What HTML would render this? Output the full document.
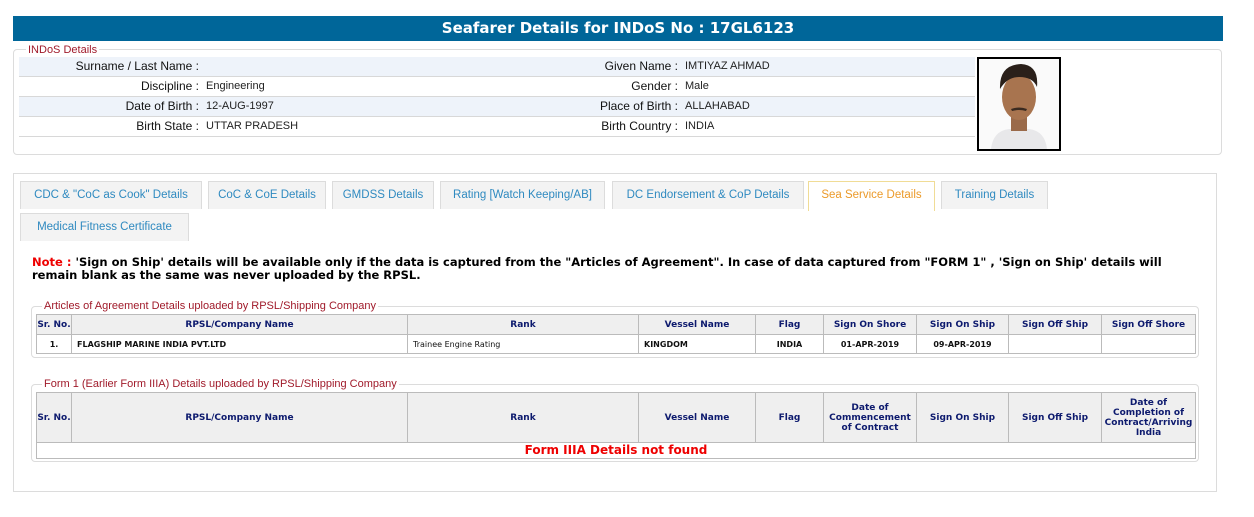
<!DOCTYPE html>
<html><head><meta charset="utf-8"><style>
*{box-sizing:border-box;margin:0;padding:0}
body{width:1254px;height:517px;background:#fff;position:relative;font-family:"Liberation Sans",Arial,sans-serif;overflow:hidden}
.a{position:absolute}
.hdr{left:13px;top:16px;width:1210px;height:25px;background:#006699;color:#fff;font:bold 15px "DejaVu Sans",Verdana,sans-serif;text-align:center;line-height:25px}
.fs{border:1px solid #dcdcdc;border-radius:4px}
.lg{background:#fff;color:#a01a2a;font-size:11px;padding:0 2px;line-height:12px}
.row{left:19px;width:956px;height:20px;border-bottom:1px solid #d8d8d8;font-size:11px;line-height:19px;color:#222}
.row.alt{background:#eef3fa}
.row span{position:absolute;white-space:nowrap}
.l1{right:776px;text-align:right;color:#111;font-size:12px}
.v1{left:187px}
.l2{right:297px;color:#111;font-size:12px}
.v2{left:666px}
.tab{position:absolute;height:28px;background:#f3f3f3;border:1px solid #dcdcdc;border-bottom:none;color:#2f8ac0;font-size:11.5px;line-height:27px;text-align:center}
.tab.on{background:#fff;border-color:#f0dc96;color:#eb9a2a;height:30px}
.note{left:32px;top:256px;width:1160px;font:bold 11.5px "DejaVu Sans",Verdana,sans-serif;line-height:13px;color:#000}
table{position:absolute;border-collapse:collapse;font:bold 9px "DejaVu Sans",Verdana,sans-serif;table-layout:fixed}
td,th{border:1px solid #bbb}
th{background:#efefef;color:#0d1a6e;font-weight:bold}
td{color:#111;font-size:8px}
</style></head><body>
<div class="a hdr">Seafarer Details for INDoS No : 17GL6123</div>

<div class="a fs" style="left:13px;top:49px;width:1209px;height:106px"></div>
<div class="a lg" style="left:26px;top:44px">INDoS Details</div>
<div class="a row alt" style="top:57px"><span class="l1">Surname / Last Name :</span><span class="l2">Given Name :</span><span class="v2">IMTIYAZ AHMAD</span></div>
<div class="a row" style="top:77px"><span class="l1">Discipline :</span><span class="v1">Engineering</span><span class="l2">Gender :</span><span class="v2">Male</span></div>
<div class="a row alt" style="top:97px"><span class="l1">Date of Birth :</span><span class="v1">12-AUG-1997</span><span class="l2">Place of Birth :</span><span class="v2">ALLAHABAD</span></div>
<div class="a row" style="top:117px"><span class="l1">Birth State :</span><span class="v1">UTTAR PRADESH</span><span class="l2">Birth Country :</span><span class="v2">INDIA</span></div>

<div class="a" style="left:977px;top:57px;width:84px;height:94px;border:2px solid #000;background:#fafafa;overflow:hidden">
<svg width="80" height="90" viewBox="0 0 80 90">
<path d="M12 90 Q14 72 30 70 L50 70 Q66 72 68 90Z" fill="#e8e8ea"/>
<rect x="32" y="58" width="16" height="14" fill="#9a6a4a"/>
<ellipse cx="40" cy="38" rx="17" ry="23" fill="#a8744f"/>
<path d="M21 30 Q20 6 42 5 Q60 6 58 28 Q54 18 40 18 Q28 18 21 30Z" fill="#2a201a"/>
<path d="M32 50 Q40 47 48 50 L47 52 Q40 50 33 52Z" fill="#3a2a20"/>
</svg></div>

<div class="a fs" style="left:13px;top:173px;width:1204px;height:319px;border-radius:0"></div>
<div class="tab" style="left:20px;top:181px;width:182px">CDC &amp; "CoC as Cook" Details</div>
<div class="tab" style="left:208px;top:181px;width:118px">CoC &amp; CoE Details</div>
<div class="tab" style="left:332px;top:181px;width:102px">GMDSS Details</div>
<div class="tab" style="left:440px;top:181px;width:165px">Rating [Watch Keeping/AB]</div>
<div class="tab" style="left:612px;top:181px;width:192px">DC Endorsement &amp; CoP Details</div>
<div class="tab on" style="left:808px;top:181px;width:127px">Sea Service Details</div>
<div class="tab" style="left:941px;top:181px;width:107px">Training Details</div>
<div class="tab" style="left:20px;top:213px;width:169px">Medical Fitness Certificate</div>

<div class="a note"><span style="color:#e00">Note :</span> 'Sign on Ship' details will be available only if the data is captured from the "Articles of Agreement". In case of data captured from "FORM 1" , 'Sign on Ship' details will remain blank as the same was never uploaded by the RPSL.</div>

<div class="a fs" style="left:31px;top:306px;width:1168px;height:52px"></div>
<div class="a lg" style="left:42px;top:300px;font-size:11px">Articles of Agreement Details uploaded by RPSL/Shipping Company</div>
<table style="left:36px;top:314px;width:1159px">
<colgroup><col style="width:35px"><col style="width:336px"><col style="width:231px"><col style="width:117px"><col style="width:68px"><col style="width:93px"><col style="width:92px"><col style="width:93px"><col style="width:94px"></colgroup>
<tr style="height:20px"><th>Sr. No.</th><th>RPSL/Company Name</th><th>Rank</th><th>Vessel Name</th><th>Flag</th><th>Sign On Shore</th><th>Sign On Ship</th><th>Sign Off Ship</th><th>Sign Off Shore</th></tr>
<tr style="height:19px"><td style="text-align:center">1.</td><td style="padding-left:5px">FLAGSHIP MARINE INDIA PVT.LTD</td><td style="padding-left:5px;font-weight:normal">Trainee Engine Rating</td><td style="padding-left:5px">KINGDOM</td><td style="text-align:center">INDIA</td><td style="text-align:center">01-APR-2019</td><td style="text-align:center">09-APR-2019</td><td></td><td></td></tr>
</table>

<div class="a fs" style="left:31px;top:384px;width:1168px;height:78px"></div>
<div class="a lg" style="left:42px;top:378px;font-size:11px">Form 1 (Earlier Form IIIA) Details uploaded by RPSL/Shipping Company</div>
<table style="left:36px;top:392px;width:1159px">
<colgroup><col style="width:35px"><col style="width:336px"><col style="width:231px"><col style="width:117px"><col style="width:68px"><col style="width:93px"><col style="width:92px"><col style="width:93px"><col style="width:94px"></colgroup>
<tr style="height:50px"><th>Sr. No.</th><th>RPSL/Company Name</th><th>Rank</th><th>Vessel Name</th><th>Flag</th><th>Date of Commencement of Contract</th><th>Sign On Ship</th><th>Sign Off Ship</th><th>Date of Completion of Contract/Arriving India</th></tr>
<tr style="height:16px"><td colspan="9" style="text-align:center;color:#e00;font-size:12px;font-weight:bold;line-height:13px">Form IIIA Details not found</td></tr>
</table>
</body></html>
